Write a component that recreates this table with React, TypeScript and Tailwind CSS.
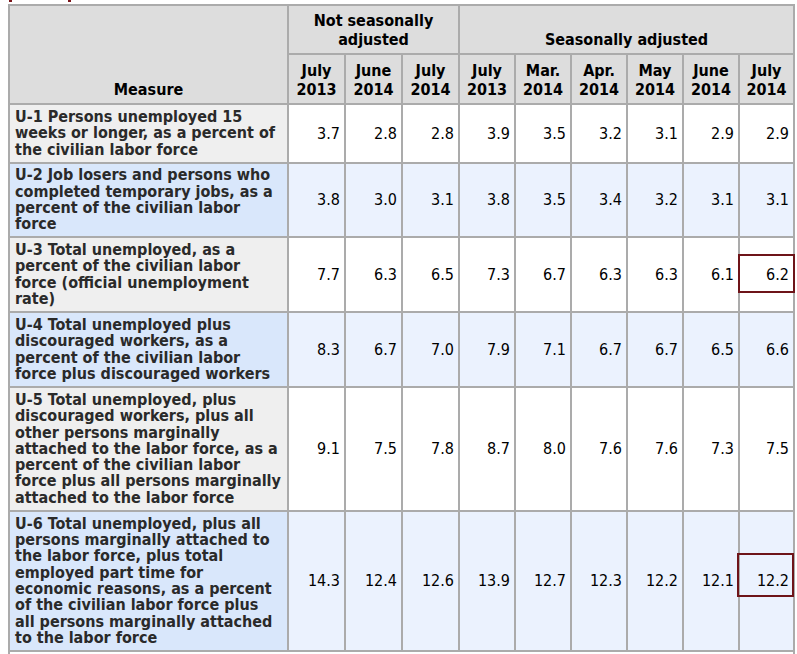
import React from "react";

const rows: { lines: string[]; vals: string[]; blue: boolean; box?: string }[] = [
  {
    lines: ["U-1 Persons unemployed 15", "weeks or longer, as a percent of", "the civilian labor force"],
    vals: ["3.7", "2.8", "2.8", "3.9", "3.5", "3.2", "3.1", "2.9", "2.9"],
    blue: false,
  },
  {
    lines: ["U-2 Job losers and persons who", "completed temporary jobs, as a", "percent of the civilian labor", "force"],
    vals: ["3.8", "3.0", "3.1", "3.8", "3.5", "3.4", "3.2", "3.1", "3.1"],
    blue: true,
  },
  {
    lines: ["U-3 Total unemployed, as a", "percent of the civilian labor", "force (official unemployment", "rate)"],
    vals: ["7.7", "6.3", "6.5", "7.3", "6.7", "6.3", "6.3", "6.1", "6.2"],
    blue: false,
    box: "u3",
  },
  {
    lines: ["U-4 Total unemployed plus", "discouraged workers, as a", "percent of the civilian labor", "force plus discouraged workers"],
    vals: ["8.3", "6.7", "7.0", "7.9", "7.1", "6.7", "6.7", "6.5", "6.6"],
    blue: true,
  },
  {
    lines: [
      "U-5 Total unemployed, plus",
      "discouraged workers, plus all",
      "other persons marginally",
      "attached to the labor force, as a",
      "percent of the civilian labor",
      "force plus all persons marginally",
      "attached to the labor force",
    ],
    vals: ["9.1", "7.5", "7.8", "8.7", "8.0", "7.6", "7.6", "7.3", "7.5"],
    blue: false,
  },
  {
    lines: [
      "U-6 Total unemployed, plus all",
      "persons marginally attached to",
      "the labor force, plus total",
      "employed part time for",
      "economic reasons, as a percent",
      "of the civilian labor force plus",
      "all persons marginally attached",
      "to the labor force",
    ],
    vals: ["14.3", "12.4", "12.6", "13.9", "12.7", "12.3", "12.2", "12.1", "12.2"],
    blue: true,
    box: "u6",
  },
];

const colHeads = [
  ["July", "2013"],
  ["June", "2014"],
  ["July", "2014"],
  ["July", "2013"],
  ["Mar.", "2014"],
  ["Apr.", "2014"],
  ["May", "2014"],
  ["June", "2014"],
  ["July", "2014"],
];

export default function App() {
  return (
    <div className="h-[654px] w-[797px] overflow-hidden bg-white font-['DejaVu_Sans_Condensed','DejaVu_Sans',sans-serif] text-[16px]">
      <div className="flex h-[4px] items-start">
        <div className="ml-[9px] h-[2px] w-[3px] bg-[#7a1419]" />
        <div className="ml-[56px] h-[2px] w-[3px] bg-[#7a1419]" />
      </div>
      <div className="ml-[8px] grid w-[787px] grid-cols-[277px_55px_55px_55px_54px_54px_54px_54px_54px_53px] grid-rows-[47px_48px_57px_72px_73px_73px_122px_138px_auto] gap-[2px] bg-[#ababab] p-[2px]">
        <div className="row-span-2 flex flex-col items-center justify-end bg-[#dddddd] pb-[4px] font-bold leading-[19px] text-black">
          Measure
        </div>
        <div className="col-span-3 flex flex-col items-center justify-end bg-[#dddddd] pb-[4px] text-center font-bold leading-[19px] text-black">
          <span>Not seasonally</span>
          <span>adjusted</span>
        </div>
        <div className="col-span-6 flex flex-col items-center justify-end bg-[#dddddd] pb-[4px] text-center font-bold leading-[19px] text-black">
          Seasonally adjusted
        </div>
        {colHeads.map((h, i) => (
          <div
            key={i}
            className="flex flex-col items-center justify-end bg-[#dddddd] pb-[4px] text-center font-bold leading-[19px] text-black"
          >
            <span>{h[0]}</span>
            <span>{h[1]}</span>
          </div>
        ))}
        {rows.map((r, ri) => (
          <React.Fragment key={ri}>
            <div
              className={
                "flex flex-col justify-center whitespace-nowrap pl-[5px] font-bold leading-[16.3px] text-[#2a2a2a] " +
                (r.blue ? "bg-[#d9e7fb]" : "bg-[#efefef]")
              }
            >
              {r.lines.map((l, li) => (
                <span key={li}>{l}</span>
              ))}
            </div>
            {r.vals.map((v, vi) => (
              <div
                key={vi}
                className={
                  "relative flex items-center justify-end pr-[4px] text-black " +
                  (r.blue ? "bg-[#ebf2fe]" : "bg-white")
                }
              >
                {v}
                {vi === 8 && r.box === "u3" && (
                  <div className="absolute -left-[2px] -right-[2px] top-[16px] bottom-[18px] border-2 border-[#6e1419]" />
                )}
                {vi === 8 && r.box === "u6" && (
                  <div className="absolute -left-[3px] -right-[1px] top-[41px] bottom-[53px] border-2 border-[#6e1419]" />
                )}
              </div>
            ))}
          </React.Fragment>
        ))}
        <div className="col-span-10 bg-white pt-[1px] text-center leading-[16.3px] text-black">
          NOTE: Persons marginally attached to the labor force are those who currently are neither working nor looking
          for work but indicate that they want and are available for a job and have looked for work sometime in the past
          12 months.
        </div>
      </div>
    </div>
  );
}
